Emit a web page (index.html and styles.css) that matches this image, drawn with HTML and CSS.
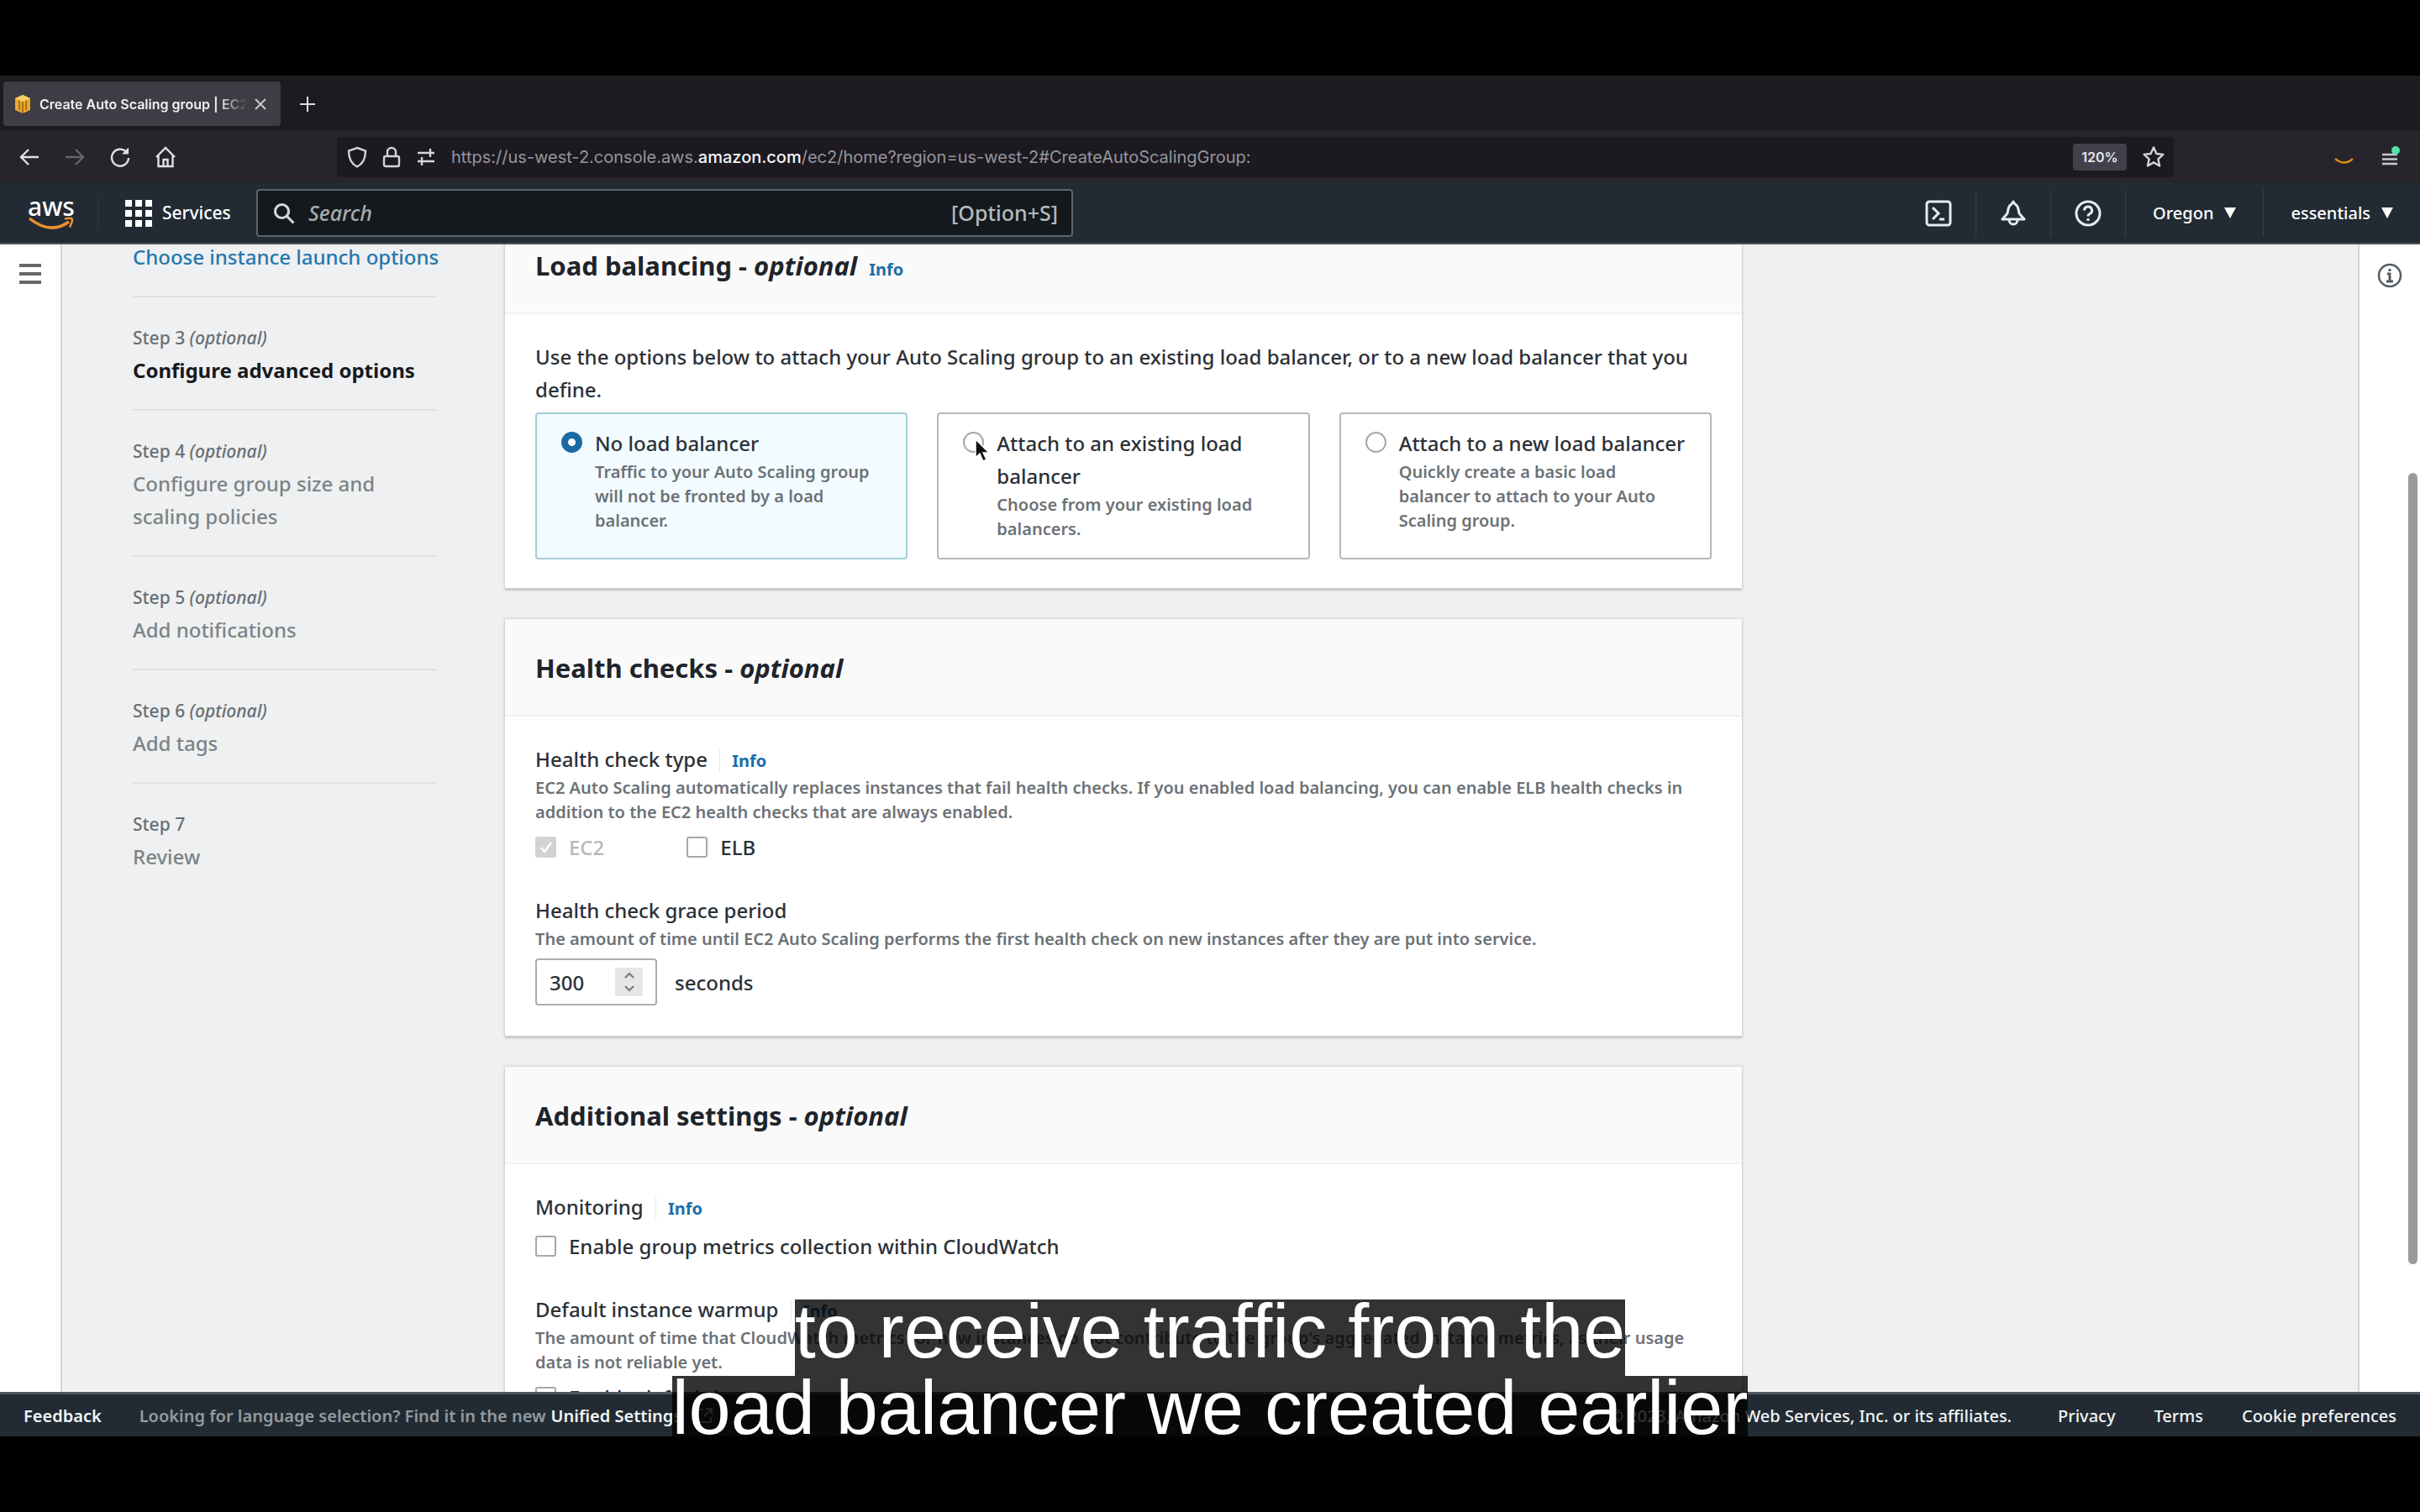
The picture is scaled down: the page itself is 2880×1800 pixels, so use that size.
FILE: index.html
```html
<!DOCTYPE html>
<html lang="en">
<head>
<meta charset="utf-8">
<title>Create Auto Scaling group | EC2</title>
<link rel="stylesheet" href="styles.css">
</head>
<body>
<div class="screen">
  <div class="tabstrip">
    <div class="tab">
      <svg class="tab-icon" viewBox="0 0 24 24"><path d="M12 1l9 4v14l-9 4-9-4V5z" fill="#e8a92e"/><path d="M12 1l9 4-9 4-9-4z" fill="#f7cf6a"/><path d="M12 9v14M8 8v11M16 8v11" stroke="#8c5a10" stroke-width="1.4" fill="none"/></svg>
      <span class="tab-title">Create Auto Scaling group | EC2</span>
      <button class="icon-btn" aria-label="Close tab"><svg width="16" height="16" viewBox="0 0 16 16"><path d="M2 2l12 12M14 2L2 14" stroke="#c9c8ce" stroke-width="2"/></svg></button>
    </div>
    <button class="icon-btn newtab" aria-label="New tab"><svg width="20" height="20" viewBox="0 0 20 20"><path d="M10 1v18M1 10h18" stroke="#e0e0e4" stroke-width="2"/></svg></button>
  </div>

  <div class="toolbar">
    <div class="tool-group">
      <button class="icon-btn" aria-label="Back"><svg width="26" height="26" viewBox="0 0 26 26" fill="none" stroke="#e0e0e4" stroke-width="2.4"><path d="M24 13H3M12 4l-9 9 9 9"/></svg></button>
      <button class="icon-btn" aria-label="Forward"><svg width="26" height="26" viewBox="0 0 26 26" fill="none" stroke="#66646d" stroke-width="2.4"><path d="M2 13h21M14 4l9 9-9 9"/></svg></button>
      <button class="icon-btn" aria-label="Reload"><svg width="26" height="26" viewBox="0 0 26 26" fill="none" stroke="#e0e0e4" stroke-width="2.4"><path d="M20 6.500A10 10 0 1 0 23 14"/><path d="M15 9.500h8v-8z" fill="#e0e0e4" stroke="none"/></svg></button>
      <button class="icon-btn" aria-label="Home"><svg width="26" height="26" viewBox="0 0 26 26" fill="none" stroke="#e0e0e4" stroke-width="2.400"><path d="M2 13L13 2l11 11M4.500 11v13h17V11M10.500 24v-8h5v8"/></svg></button>
    </div>
    <div class="urlbar">
      <svg width="24" height="26" viewBox="0 0 24 26" fill="none" stroke="#d5d4da" stroke-width="2.400"><path d="M12 2l10 3.500C22 15 19 21 12 24.500 5 21 2 15 2 5.500z"/></svg>
      <svg width="22" height="26" viewBox="0 0 22 26" fill="none" stroke="#d5d4da" stroke-width="2.400"><rect x="2" y="12" width="18" height="12" rx="2"/><path d="M6 12V7a5 5 0 0 1 10 0v5"/></svg>
      <svg width="24" height="26" viewBox="0 0 24 26" fill="none" stroke="#d5d4da" stroke-width="2.400"><path d="M2 8h20M17 3v10M22 18H2M7 13v10"/></svg>
      <span class="url">https://us-west-2.console.aws.<b>amazon.com</b>/ec2/home?region=us-west-2#CreateAutoScalingGroup:</span>
      <button class="zoom-level">120%</button>
      <button class="icon-btn" aria-label="Bookmark"><svg width="28" height="28" viewBox="0 0 28 28" fill="none" stroke="#d5d4da" stroke-width="2.400" stroke-linejoin="round"><path d="M14 2.500l3.400 7.500 8 .9-6 5.500 1.700 8.100-7.100-4.100-7.100 4.100 1.700-8.100-6-5.500 8-.9z"/></svg></button>
    </div>
    <div class="tool-end">
      <svg width="24" height="26" viewBox="0 0 24 26" fill="none" stroke="#d98a1f" stroke-width="2.400"><path d="M1 15q11 9 21 0"/></svg>
      <button class="icon-btn menu-btn" aria-label="Menu"><svg width="22" height="26" viewBox="0 0 22 26"><path d="M1 10h18M1 15.500h18M1 21h18" stroke="#c9c8ce" stroke-width="2.400"/><circle cx="17" cy="5" r="5" fill="#54e0a8"/></svg></button>
    </div>
  </div>

  <header class="console-nav">
    <a class="aws-logo" href="#" aria-label="AWS home"><span>aws</span><svg width="56" height="16" viewBox="0 0 56 16" fill="none" stroke="#ec912d" stroke-width="3.500"><path d="M2 2q25 20 47 4"/><path d="M44 2.500q9-2 9 1t-3 9" stroke-width="2.500"/></svg></a>
    <button class="services"><svg width="32" height="32" viewBox="0 0 32 32" fill="#fff"><path d="M0 0h8v8H0zM12 0h8v8h-8zM24 0h8v8h-8zM0 12h8v8H0zM12 12h8v8h-8zM24 12h8v8h-8zM0 24h8v8H0zM12 24h8v8h-8zM24 24h8v8h-8z"/></svg>Services</button>
    <label class="search">
      <svg width="26" height="26" viewBox="0 0 26 26" fill="none" stroke="#d5dbdb" stroke-width="3"><circle cx="10.500" cy="10.500" r="8"/><path d="M16.500 16.500l8 8"/></svg>
      <input type="search" placeholder="Search" aria-label="Search">
      <span>[Option+S]</span>
    </label>
    <nav class="nav-end">
      <button class="nav-icon" aria-label="CloudShell"><svg width="32" height="32" viewBox="0 0 32 32" fill="none" stroke="#e6ebee" stroke-width="3"><rect x="2" y="2" width="28" height="28" rx="3"/><path d="M9 9l7 7-7 7M17 23h6"/></svg></button>
      <button class="nav-icon" aria-label="Notifications"><svg width="32" height="32" viewBox="0 0 32 32" fill="none" stroke="#e6ebee" stroke-width="3" stroke-linejoin="round"><path d="M16 2l-2 3c-4 2-4 6-5 11l-6 7h26l-6-7c-1-5-1-9-5-11zM11 24a5 5 0 0 0 10 0"/></svg></button>
      <button class="nav-icon" aria-label="Help"><svg width="32" height="32" viewBox="0 0 32 32" fill="none" stroke="#e6ebee" stroke-width="3"><circle cx="16" cy="16" r="14"/><path d="M11.500 12.500a4.500 4.500 0 1 1 6.500 4q-2 1-2 3M16 22v3"/></svg></button>
      <button class="nav-text">Oregon<svg width="14" height="14" viewBox="0 0 14 14"><path d="M0 0h14L7 13z" fill="#fff"/></svg></button>
      <button class="nav-text">essentials<svg width="14" height="14" viewBox="0 0 14 14"><path d="M0 0h14L7 13z" fill="#fff"/></svg></button>
    </nav>
  </header>

  <div class="viewport">
    <aside class="rail rail-left">
      <button class="icon-btn" aria-label="Open navigation"><svg width="26" height="26" viewBox="0 0 26 26"><path d="M0 3h26M0 13h26M0 23h26" stroke="#64696c" stroke-width="4"/></svg></button>
    </aside>

    <div class="scroller">
      <ol class="steps">
        <li><a class="step-link" href="#">Choose instance launch options</a></li>
        <li><small>Step 3 <i>(optional)</i></small><strong>Configure advanced options</strong></li>
        <li><small>Step 4 <i>(optional)</i></small><span>Configure group size and scaling policies</span></li>
        <li><small>Step 5 <i>(optional)</i></small><span>Add notifications</span></li>
        <li><small>Step 6 <i>(optional)</i></small><span>Add tags</span></li>
        <li><small>Step 7</small><span>Review</span></li>
      </ol>

      <main class="cards">
        <section class="card">
          <div class="card-head"><h2>Load balancing - <i>optional</i></h2><a class="info" href="#">Info</a></div>
          <div class="card-body">
            <p class="lead">Use the options below to attach your Auto Scaling group to an existing load balancer, or to a new load balancer that you define.</p>
            <div class="tiles">
              <label class="tile selected"><input type="radio" name="lb" checked><span><b>No load balancer</b><small>Traffic to your Auto Scaling group will not be fronted by a load balancer.</small></span></label>
              <label class="tile"><input type="radio" name="lb"><span><b>Attach to an existing load balancer</b><small>Choose from your existing load balancers.</small></span>
                <svg class="pointer" width="20" height="30" viewBox="0 0 20 30"><path d="M2 1v22l5-5 4 9 4-2-4-8h7z" fill="#111" stroke="#fff" stroke-width="1.500"/></svg>
              </label>
              <label class="tile"><input type="radio" name="lb"><span><b>Attach to a new load balancer</b><small>Quickly create a basic load balancer to attach to your Auto Scaling group.</small></span></label>
            </div>
          </div>
        </section>

        <section class="card">
          <div class="card-head"><h2>Health checks - <i>optional</i></h2></div>
          <div class="card-body fields">
            <div class="field">
              <div class="field-label">Health check type <a class="info divided" href="#">Info</a></div>
              <p class="hint">EC2 Auto Scaling automatically replaces instances that fail health checks. If you enabled load balancing, you can enable ELB health checks in addition to the EC2 health checks that are always enabled.</p>
              <div class="checks">
                <label class="check"><input type="checkbox" checked disabled>EC2</label>
                <label class="check"><input type="checkbox">ELB</label>
              </div>
            </div>
            <div class="field">
              <label class="field-label" for="grace">Health check grace period</label>
              <p class="hint">The amount of time until EC2 Auto Scaling performs the first health check on new instances after they are put into service.</p>
              <div class="with-unit">
                <div class="stepper">
                  <input id="grace" type="number" value="300">
                  <div class="spin">
                    <button aria-label="Increase"><svg width="14" height="9" viewBox="0 0 14 9"><path d="M2 7l5-5 5 5" fill="none" stroke="#777" stroke-width="2"/></svg></button>
                    <button aria-label="Decrease"><svg width="14" height="9" viewBox="0 0 14 9"><path d="M2 2l5 5 5-5" fill="none" stroke="#777" stroke-width="2"/></svg></button>
                  </div>
                </div>
                <span>seconds</span>
              </div>
            </div>
          </div>
        </section>

        <section class="card">
          <div class="card-head"><h2>Additional settings - <i>optional</i></h2></div>
          <div class="card-body fields">
            <div class="field">
              <div class="field-label">Monitoring <a class="info divided" href="#">Info</a></div>
              <div class="checks"><label class="check"><input type="checkbox">Enable group metrics collection within CloudWatch</label></div>
            </div>
            <div class="field">
              <div class="field-label">Default instance warmup <a class="info divided" href="#">Info</a></div>
              <p class="hint">The amount of time that CloudWatch metrics for new instances do not contribute to the group's aggregated instance metrics, as their usage data is not reliable yet.</p>
              <div class="checks"><label class="check"><input type="checkbox">Enable default instance warmup</label></div>
            </div>
          </div>
        </section>
      </main>
    </div>

    <aside class="rail rail-right">
      <button class="icon-btn" aria-label="Open info panel"><svg width="30" height="30" viewBox="0 0 30 30" fill="none" stroke="#545b64" stroke-width="2.500"><circle cx="15" cy="15" r="13"/><path d="M15 7v3M12 13h3v8M11 22h8" stroke-width="3"/></svg></button>
    </aside>
    <div class="thumb"></div>
  </div>

  <footer class="console-foot">
    <button class="feedback">Feedback</button>
    <p>Looking for language selection? Find it in the new <a href="#">Unified Settings</a> <svg width="20" height="20" viewBox="0 0 20 20" fill="none" stroke="#aab7b8" stroke-width="2"><path d="M8 3H2v15h15v-6M11 2h7v7M18 2l-9 9"/></svg></p>
    <div class="legal">
      <span>© 2023, Amazon Web Services, Inc. or its affiliates.</span>
      <a href="#">Privacy</a><a href="#">Terms</a><a href="#">Cookie preferences</a>
    </div>
  </footer>
</div>
<div class="caption"><span>to receive traffic from the</span><span>load balancer we created earlier</span></div>
</body>
</html>
```
FILE: styles.css
```css
* { box-sizing: border-box; }
html, body { margin: 0; height: 100%; }
body {
  background: #000;
  padding: 90px 0;
  overflow: hidden;
  position: relative;
  font: 500 24px/39px "Noto Sans", "Open Sans", sans-serif;
  color: #2b3036;
}
button, input { font: inherit; color: inherit; margin: 0; padding: 0; border: 0; background: none; }
a { color: inherit; text-decoration: none; }
svg { display: block; flex: none; }
h2, p, ol { margin: 0; padding: 0; }
.icon-btn { display: flex; align-items: center; justify-content: center; }
.screen { height: 100%; display: flex; flex-direction: column; background: #eff0f1; }

/* Browser chrome */
.tabstrip { height: 65px; background: #1c1b20; display: flex; align-items: center; padding: 2px 4px 0; gap: 22px; flex: none; }
.tab { width: 330px; height: 53px; border-radius: 4px; background: #3e3c44; display: flex; align-items: center; padding: 0 16px 0 11px; gap: 8px; font: 600 16px/24px Inter, sans-serif; color: #f0f0f4; }
.tab-icon { width: 24px; height: 24px; }
.tab-title { flex: 1; overflow: hidden; white-space: nowrap; mask-image: linear-gradient(90deg, #000 86%, transparent); }
.toolbar { height: 62px; background: #27252b; display: flex; align-items: center; flex: none; padding: 2px 24px 0 22px; }
.tool-group { width: 379px; display: flex; gap: 28px; flex: none; }
.urlbar { flex: 1; height: 48px; background: #1c1a20; border-radius: 4px; display: flex; align-items: center; padding: 0 10px 0 12px; gap: 18px; color: #97959e; font: 400 20px/28px Inter, sans-serif; }
.url { flex: 1; white-space: nowrap; overflow: hidden; }
.url b { font-weight: 500; color: #f4f4f8; }
.zoom-level { width: 64px; height: 32px; border-radius: 4px; background: #42414b; color: #e6e6ea; font-size: 16px; font-weight: 600; line-height: 32px; }
.tool-end { width: 269px; display: flex; justify-content: flex-end; gap: 32px; }

/* Console header */
.console-nav { height: 74px; flex: none; background: #222b33; border-bottom: 2px solid #4a525a; padding-top: 1px; display: flex; align-items: center; color: #fff; font-size: 21px; }
.aws-logo { width: 117px; padding-left: 33px; border-right: 1px solid #2e3942; flex: none; font: 500 30px/24px "Noto Sans", sans-serif; }
.aws-logo span { display: block; }
.services { width: 188px; flex: none; display: flex; align-items: center; gap: 12px; padding-left: 32px; }
.search { width: 972px; height: 57px; border: 2px solid #5a646c; border-radius: 4px; background: #15191e; display: flex; align-items: center; gap: 16px; padding: 0 16px 0 18px; color: #b4babd; font-size: 25px; }
.search input { flex: 1; min-width: 0; outline: none; appearance: none; }
.search input::placeholder { color: #a4aaae; font-style: italic; opacity: 1; }
.nav-end { margin-left: auto; display: flex; align-items: center; }
.nav-icon { width: 89px; height: 56px; display: flex; align-items: center; justify-content: center; border-right: 1px solid #35414b; }
.nav-text { height: 56px; display: flex; align-items: center; gap: 13px; padding: 0 32px; white-space: nowrap; font-size: 20px; }
.nav-text:last-child { border-left: 1px solid #35414b; }

/* Page area */
.viewport { flex: 1; min-height: 0; overflow: hidden; display: flex; position: relative; }
.rail { width: 74px; flex: none; background: #fff; display: flex; justify-content: center; align-items: flex-start; padding-top: 22px; }
.rail-left { border-right: 2px solid #d3d5d6; }
.rail-right { border-left: 2px solid #d3d5d6; }
.thumb { position: absolute; right: 3px; top: 272px; width: 11px; height: 942px; border-radius: 6px; background: #9a9b9c; }
.scroller { flex: 1; display: flex; align-items: flex-start; gap: 81px; margin-top: -33px; padding-left: 84px; }
.steps { list-style: none; width: 362px; flex: none; padding-top: 28px; }
.steps li { display: flex; flex-direction: column; gap: 4px; color: #7b8487; }
.steps li + li { border-top: 2px solid #dfe1e2; padding-top: 33px; }
.steps li:not(:last-child) { padding-bottom: 27px; }
.steps small { font-size: 21px; line-height: 30px; font-weight: 500; color: #686f74; }
.steps strong { color: #16191f; font-weight: 700; }
.step-link { color: #2478ad; white-space: nowrap; }
.cards { flex: 1; max-width: 1472px; display: flex; flex-direction: column; gap: 37px; }
.card { background: #fff; box-shadow: 0 0 3px 1px #cdd0d1, 0 3px 2px #c4c7c8; flex: none; }
.card-head { height: 116px; background: #fafafb; border-bottom: 2px solid #f0f0f1; padding: 38px 36px 0; display: flex; align-items: baseline; gap: 14px; }
h2 { font-size: 31px; line-height: 40px; font-weight: 700; color: #20242a; }
.info { color: #1a6ea8; font-weight: 700; font-size: 20px; line-height: 28px; }
.divided { border-left: 1px solid #e8e9ea; padding-left: 14px; margin-left: 8px; }
.card-body { padding: 31px 36px 34px; }
.lead { padding-bottom: 8px; line-height: 39px; }
.tiles { display: grid; grid-template-columns: repeat(3, 1fr); gap: 35px; }
.tile { position: relative; border: 2px solid #b4b8bb; border-radius: 4px; padding: 15px 20px 20px 29px; display: flex; align-items: flex-start; gap: 15px; }
.tile.selected { background: #f2fbff; border-color: #a5cfd6; }
.tile b, .tile small { display: block; }
.tile b { font-weight: 500; }
.tile small { padding-right: 16px; }
small, .hint { font-size: 20px; line-height: 29px; font-weight: 600; color: #6c7277; }
.pointer { position: absolute; left: 42px; top: 29px; }
input[type=radio], input[type=checkbox] { appearance: none; width: 25px; height: 25px; border: 2px solid #a3a8ab; background: #fff; flex: none; }
input[type=radio] { border-radius: 50%; margin-top: 6px; }
input[type=radio]:checked { border: 8px solid #1c6aa3; }
input[type=checkbox] { border-radius: 3px; }
input[type=checkbox]:disabled { border-color: #d0d3d4; background: #d0d3d4 url("data:image/svg+xml,%3Csvg xmlns='http://www.w3.org/2000/svg' viewBox='0 0 20 20'%3E%3Cpath d='M4 10l4 5 8-11' fill='none' stroke='white' stroke-width='2.500'/%3E%3C/svg%3E") center / 20px no-repeat; }
.fields { display: flex; flex-direction: column; gap: 36px; }
.field-label { display: block; line-height: 39px; }
.checks { display: flex; gap: 98px; padding-top: 8px; }
.check { display: flex; align-items: center; gap: 15px; line-height: 39px; }
.check:has(:disabled) { color: #b4b9bb; }
.with-unit { display: flex; align-items: center; gap: 21px; padding: 9px 0 2px; }
.stepper { width: 145px; height: 56px; border: 2px solid #a9adaf; border-radius: 4px; display: flex; align-items: center; padding: 0 15px; }
.stepper input { flex: 1; min-width: 0; appearance: textfield; outline: none; }
.stepper input::-webkit-inner-spin-button { appearance: none; }
.spin { width: 33px; height: 34px; background: #e6e6e7; display: flex; flex-direction: column; justify-content: space-evenly; align-items: center; flex: none; }
.spin button { display: block; }

/* Console footer */
.console-foot { height: 53px; flex: none; background: #222b33; border-top: 3px solid #50575d; display: flex; align-items: center; padding: 0 28px; color: #f2f4f5; font-size: 20px; white-space: nowrap; }
.feedback { font-weight: 600; margin-right: 45px; }
.console-foot p { display: flex; align-items: center; gap: 6px; color: #939a9f; font-weight: 600; }
.console-foot p a { color: #f2f4f5; font-weight: 600; }
.console-foot p svg { margin-left: 12px; }
.legal { margin-left: auto; display: flex; gap: 46px; }
.legal span { margin-right: 9px; }

/* Video captions */
.caption { position: absolute; left: 0; right: 0; bottom: 71px; display: flex; flex-direction: column; align-items: center; font: 400 90px/77px "Liberation Sans", Arial, sans-serif; color: #fff; }
.caption span { background: rgba(0, 0, 0, .8); padding-bottom: 14px; white-space: nowrap; }
```
